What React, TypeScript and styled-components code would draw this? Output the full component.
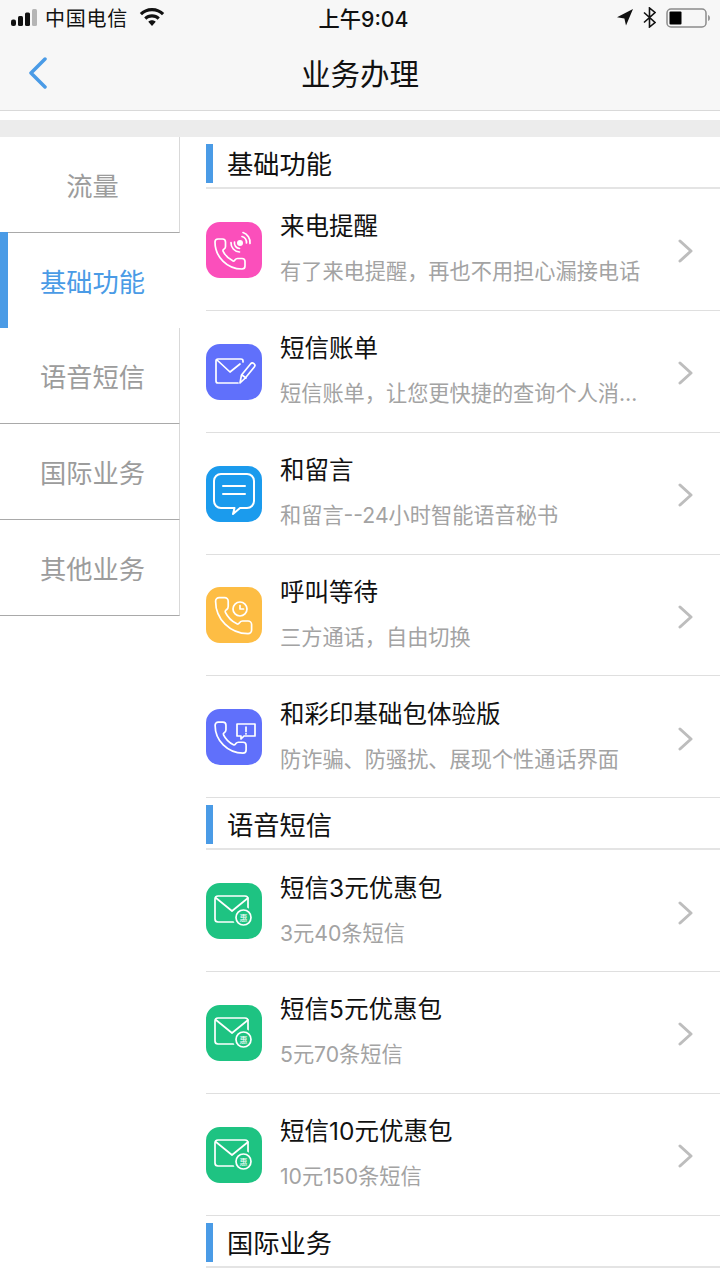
import React from "react";
import styled, { createGlobalStyle } from "styled-components";

const FONT = `Inter, "Noto Sans CJK SC", sans-serif`;

const Global = createGlobalStyle`
  html, body { margin: 0; padding: 0; background: #fff; }
  body { font-family: ${FONT}; width: 720px; height: 1280px; overflow: hidden; }
  * { box-sizing: border-box; }
`;

const Page = styled.div`
  width: 720px;
  height: 1280px;
  overflow: hidden;
  background: #fff;
  display: flex;
  flex-direction: column;
`;

const Header = styled.header`
  height: 111px;
  flex: none;
  background: #f7f7f7;
  border-bottom: 1px solid #d9d9d9;
  display: flex;
  flex-direction: column;
`;

const StatusBar = styled.div`
  height: 35px;
  padding: 0 9px 0 11px;
  display: grid;
  grid-template-columns: 1fr auto 1fr;
  align-items: center;
  color: #111;
`;

const StatusLeft = styled.div`
  display: flex;
  align-items: center;
  font-size: 20px;
  gap: 6px;
`;

const Carrier = styled.span`
  letter-spacing: 0.75px;
  margin-right: 5px;
`;

const Clock = styled.div`
  font-size: 21.25px;
  font-weight: 500;
  margin-left: 5px;
`;

const StatusRight = styled.div`
  display: flex;
  align-items: center;
  justify-content: flex-end;
  gap: 10px;
`;

const NavBar = styled.div`
  flex: 1;
  display: grid;
  grid-template-columns: 1fr auto 1fr;
  align-items: center;
`;

const BackButton = styled.div`
  display: flex;
  align-items: center;
  padding-left: 29px;
`;

const NavTitle = styled.h1`
  margin: 3px 0 0;
  font-size: 29.5px;
  line-height: 40px;
  font-weight: 400;
  color: #111;
`;

const GreyStrip = styled.div`
  margin-top: 9px;
  height: 17px;
  flex: none;
  background: #ececec;
`;

const Body = styled.div`
  flex: 1;
  display: flex;
  min-height: 0;
`;

const Sidebar = styled.nav`
  width: 180px;
  flex: none;
  display: flex;
  flex-direction: column;
`;

const SideItem = styled.div<{ $active?: boolean }>`
  height: 96px;
  flex: none;
  display: flex;
  align-items: center;
  justify-content: center;
  font-size: 26.25px;
  color: ${(p) => (p.$active ? "#4a9be6" : "#9c9c9c")};
  margin-top: ${(p) => (p.$active ? "-1px" : "0")};
  border-left: ${(p) => (p.$active ? "8px solid #4a9be6" : "none")};
  padding: ${(p) => (p.$active ? "1px 3px 0 0" : "1px 0 0 6px")};
  border-right: ${(p) => (p.$active ? "none" : "1px solid #d9d9d9")};
  border-bottom: ${(p) => (p.$active ? "none" : "1px solid #a9a9a9")};
`;

const Main = styled.main`
  flex: 1;
  padding-left: 26px;
  display: flex;
  flex-direction: column;
  min-width: 0;
`;

const SectionHeader = styled.div`
  height: 52px;
  flex: none;
  display: flex;
  align-items: center;
  gap: 14px;
  padding: 7px 0 4px;
  border-bottom: 2px solid #e4e4e4;
`;

const SectionBar = styled.div`
  width: 7px;
  height: 39px;
  background: #4a9be6;
`;

const SectionTitle = styled.div`
  font-size: 26.25px;
  color: #111;
  margin-top: -1px;
`;

const Row = styled.div`
  height: 121.85px;
  flex: none;
  display: flex;
  align-items: center;
  gap: 18px;
  padding: 1px 27px 0 0;
  border-bottom: 1px solid #dfdfdf;
`;

const IconTile = styled.div<{ $bg: string }>`
  width: 56px;
  height: 56px;
  flex: none;
  border-radius: 14px;
  background: ${(p) => p.$bg};
  display: flex;
`;

const RowText = styled.div`
  flex: 1;
  min-width: 0;
  display: flex;
  flex-direction: column;
  gap: 13px;
  margin-top: -4px;
`;

const RowTitle = styled.div`
  font-size: 24.5px;
  line-height: 34px;
  color: #111;
`;

const RowSub = styled.div`
  font-size: 21.2px;
  line-height: 30px;
  color: #a3a3a3;
  white-space: nowrap;
`;

const ChevronBox = styled.div`
  display: flex;
  margin-top: 3px;
`;

const Line = styled.svg.attrs({
  fill: "none",
  stroke: "#fff",
  strokeWidth: 1.7,
  strokeLinecap: "round",
  strokeLinejoin: "round",
  viewBox: "0 0 56 56",
  width: 56,
  height: 56,
})``;

const PHONE =
  "M13.832 16.568a1 1 0 0 0 1.213-.303l.355-.465A2 2 0 0 1 17 15h3a2 2 0 0 1 2 2v3a2 2 0 0 1-2 2A18 18 0 0 1 2 4a2 2 0 0 1 2-2h3a2 2 0 0 1 2 2v3a2 2 0 0 1-.8 1.6l-.468.351a1 1 0 0 0-.292 1.233 14 14 0 0 0 6.392 6.384";

const Handset = ({ x, y, s }: { x: number; y: number; s: number }) => (
  <path d={PHONE} transform={`translate(${x} ${y}) scale(${s})`} strokeWidth={1.7 / s} />
);

const RingIcon = () => (
  <Line>
    <Handset x={6} y={14} s={1.5} />
    <circle cx="34" cy="21" r="3" fill="#fff" stroke="none" />
    <path d="M28.5 20a5.500 5.500 0 0 0 5 6.500M25 20.500a9 9 0 0 0 8.500 9.500" />
    <path d="M36 14.500a6.500 6.500 0 0 1 4.500 6.500M37 10.500a10.500 10.500 0 0 1 7 11" />
  </Line>
);

const MailPenIcon = () => (
  <Line>
    <path d="M37 18v-1a2 2 0 0 0-2-2H12a2 2 0 0 0-2 2v20a2 2 0 0 0 2 2h20" />
    <path d="M11 16l13 12 10-8" />
    <path d="M34 39l1.500-8 9-11a2.400 2.400 0 0 1 3.800 3l-9 11zM36 31l4 3" />
  </Line>
);

const ChatIcon = () => (
  <Line>
    <g strokeWidth="2">
      <path d="M15 8h26a7 7 0 0 1 7 7v20a7 7 0 0 1-7 7H34l-7 6 1.500-6H15a7 7 0 0 1-7-7V15a7 7 0 0 1 7-7z" />
      <path d="M17 20h22M17 28h22" />
    </g>
  </Line>
);

const WaitIcon = () => (
  <Line>
    <Handset x={6} y={7} s={1.8} />
    <circle cx="34" cy="22" r="7" />
    <path d="M34 18.500V22h3.500" />
  </Line>
);

const AlertIcon = () => (
  <Line>
    <Handset x={6} y={10} s={1.55} />
    <path d="M31 15h18v12H38l-3 3v-3h-4z" />
    <path d="M40 18v4.500M40 24.500v.5" />
  </Line>
);

const DealIcon = () => (
  <Line>
    <path d="M12 13h27a3 3 0 0 1 3 3v20a3 3 0 0 1-3 3H12a3 3 0 0 1-3-3V16a3 3 0 0 1 3-3z" />
    <path d="M10 15l16 13 16-13" />
    <circle cx="37.500" cy="34.500" r="10.500" fill="#1ec382" stroke="none" />
    <circle cx="37.500" cy="34.500" r="7.500" />
    <text x="37.500" y="37.500" fontSize="8" textAnchor="middle" fill="#fff" stroke="none">惠</text>
  </Line>
);

const Chevron = () => (
  <ChevronBox>
    <svg width="16" height="24" viewBox="0 0 16 24" fill="none" stroke="#bdbdbd" strokeWidth="3" strokeLinecap="round" strokeLinejoin="round">
      <path d="M3 2l11 10L3 22" />
    </svg>
  </ChevronBox>
);

type Item = { title: string; sub: string; bg: string; icon: React.ReactNode };

const basics: Item[] = [
  { title: "来电提醒", sub: "有了来电提醒，再也不用担心漏接电话", bg: "#fb4fbb", icon: <RingIcon /> },
  { title: "短信账单", sub: "短信账单，让您更快捷的查询个人消…", bg: "#6070fb", icon: <MailPenIcon /> },
  { title: "和留言", sub: "和留言--24小时智能语音秘书", bg: "#1b9bed", icon: <ChatIcon /> },
  { title: "呼叫等待", sub: "三方通话，自由切换", bg: "#fdbd44", icon: <WaitIcon /> },
  { title: "和彩印基础包体验版", sub: "防诈骗、防骚扰、展现个性通话界面", bg: "#6070fb", icon: <AlertIcon /> },
];

const voice: Item[] = [
  { title: "短信3元优惠包", sub: "3元40条短信", bg: "#1ec382", icon: <DealIcon /> },
  { title: "短信5元优惠包", sub: "5元70条短信", bg: "#1ec382", icon: <DealIcon /> },
  { title: "短信10元优惠包", sub: "10元150条短信", bg: "#1ec382", icon: <DealIcon /> },
];

const ServiceRow = ({ item }: { item: Item }) => (
  <Row>
    <IconTile $bg={item.bg}>{item.icon}</IconTile>
    <RowText>
      <RowTitle>{item.title}</RowTitle>
      <RowSub>{item.sub}</RowSub>
    </RowText>
    <Chevron />
  </Row>
);

const Section = ({ title }: { title: string }) => (
  <SectionHeader>
    <SectionBar />
    <SectionTitle>{title}</SectionTitle>
  </SectionHeader>
);

export default function App() {
  return (
    <Page>
      <Global />
      <Header>
        <StatusBar>
          <StatusLeft>
            <svg width="28" height="17" viewBox="0 0 28 17" fill="#111">
              <rect x="0" y="10.500" width="5" height="6.500" rx="2" />
              <rect x="7" y="7" width="5" height="10" rx="1.500" />
              <rect x="14" y="3.500" width="5" height="13.500" rx="1.500" />
              <rect x="21" y="0" width="5" height="17" rx="1.500" fill="#b5b5b5" />
            </svg>
            <Carrier>中国电信</Carrier>
            <svg width="26" height="19" viewBox="0 0 26 19" fill="#111">
              <path d="M13 0C8 0 3.800 2 0.800 5L3 7.300C5.500 4.800 9 3.300 13 3.300S20.500 4.800 23 7.300L25.200 5C22.200 2 18 0 13 0Z" />
              <path d="M13 6.200C10 6.200 7.300 7.400 5.200 9.400L7.400 11.700C8.900 10.300 10.900 9.500 13 9.500S17.100 10.300 18.600 11.700L20.800 9.400C18.700 7.400 16 6.200 13 6.200Z" />
              <path d="M13 12.300C11.500 12.300 10.300 12.800 9.300 13.800L13 18L16.700 13.800C15.700 12.800 14.500 12.300 13 12.300Z" />
            </svg>
          </StatusLeft>
          <Clock>上午9:04</Clock>
          <StatusRight>
            <svg width="16" height="17" viewBox="0 0 16 17" fill="#111">
              <path d="M16 0L0 8.200l7.400 1.300L9 16.500z" />
            </svg>
            <svg width="13" height="21" viewBox="0 0 13 21" fill="none" stroke="#111" strokeWidth="1.600">
              <path d="M1 5.500l11 10-5.500 4.500V1L12 5.500 1 15.500" />
            </svg>
            <svg width="45" height="20" viewBox="0 0 45 20" fill="none">
              <rect x="1" y="1" width="39" height="18" rx="4" stroke="#8c8c8c" strokeWidth="1.500" />
              <rect x="3.500" y="3.500" width="12" height="13" rx="1" fill="#000" />
              <path d="M42 7c1.500.5 2 1.500 2 3s-.5 2.500-2 3z" fill="#9a9a9a" />
            </svg>
          </StatusRight>
        </StatusBar>
        <NavBar>
          <BackButton>
            <svg width="18" height="32" viewBox="0 0 18 32" fill="none" stroke="#4a9be6" strokeWidth="3.500" strokeLinecap="round" strokeLinejoin="round">
              <path d="M16 2L2 16l14 14" />
            </svg>
          </BackButton>
          <NavTitle>业务办理</NavTitle>
        </NavBar>
      </Header>
      <GreyStrip />
      <Body>
        <Sidebar>
          <SideItem>流量</SideItem>
          <SideItem $active>基础功能</SideItem>
          <SideItem>语音短信</SideItem>
          <SideItem>国际业务</SideItem>
          <SideItem>其他业务</SideItem>
        </Sidebar>
        <Main>
          <Section title="基础功能" />
          {basics.map((item) => <ServiceRow key={item.title} item={item} />)}
          <Section title="语音短信" />
          {voice.map((item) => <ServiceRow key={item.title} item={item} />)}
          <Section title="国际业务" />
        </Main>
      </Body>
    </Page>
  );
}
